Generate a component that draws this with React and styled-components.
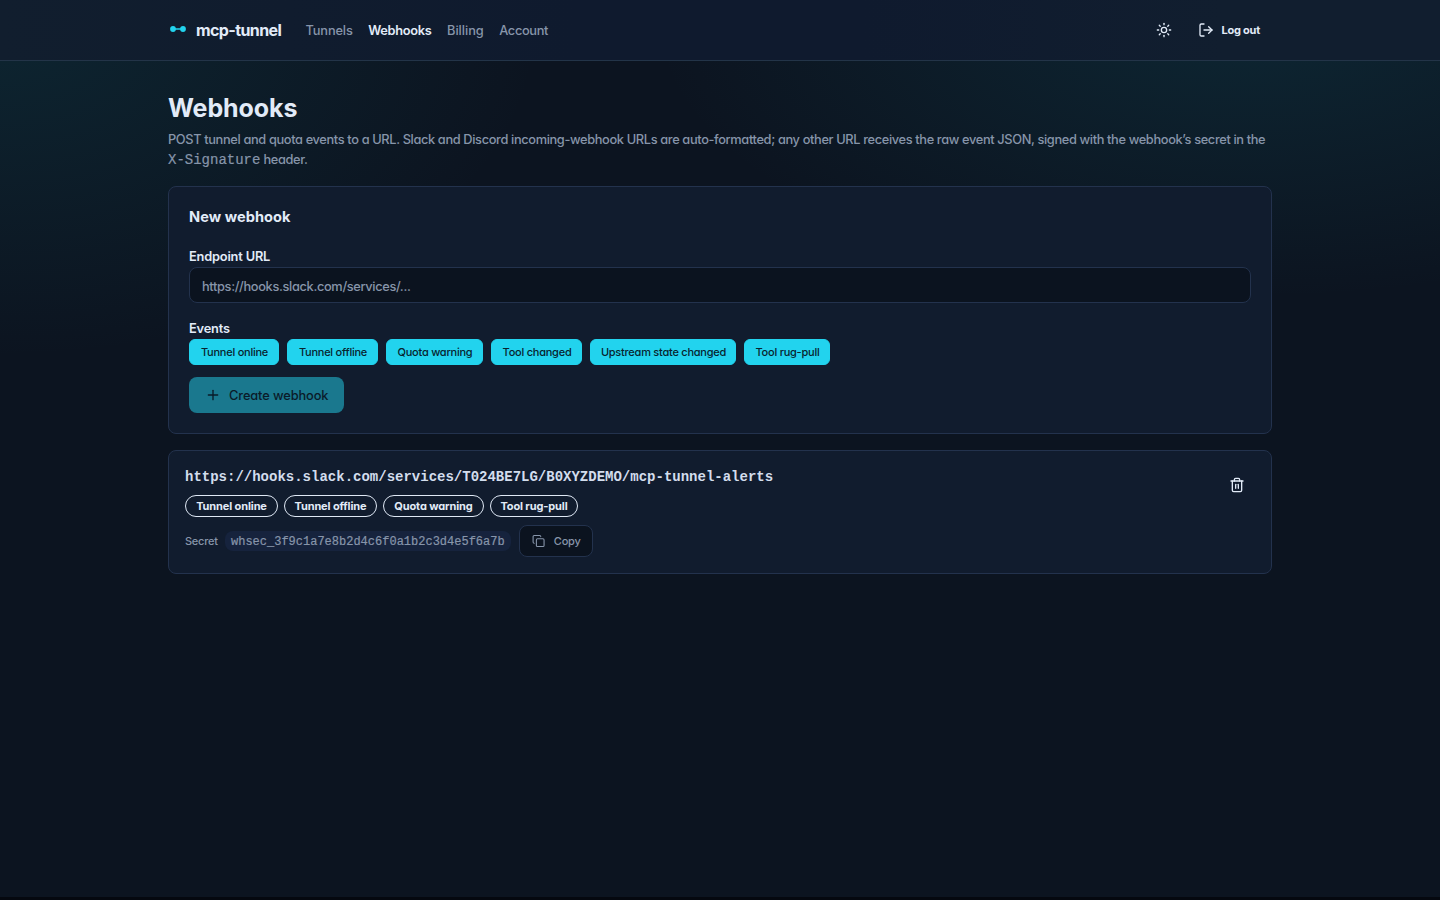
import React from "react";
import styled, { createGlobalStyle } from "styled-components";
import { Sun, LogOut, Plus, Copy, Trash2 } from "lucide-react";

const sans = '"Inter", "Liberation Sans", sans-serif';
const mono = '"Liberation Mono", monospace';

const GlobalStyle = createGlobalStyle`
  *, *::before, *::after { box-sizing: border-box; }
  body {
    margin: 0;
    background: #0c1420;
    color: #e2ebf8;
    font: 450 12.8px/20px ${sans};
    font-feature-settings: "cv11";
  }
  button, input { font: inherit; font-feature-settings: inherit; color: inherit; }
`;

const Page = styled.div`
  height: 900px;
  overflow: hidden;
  border-bottom: 3px solid #05080f;
  background:
    radial-gradient(540px 330px at 0% 3%, rgba(18, 120, 130, 0.17), transparent 100%),
    radial-gradient(600px 280px at 87% 2%, rgba(18, 120, 135, 0.18), transparent 100%),
    #0c1420;
`;

const Header = styled.header`
  height: 61px;
  background: linear-gradient(90deg, #111e2e 0%, #0f1a2e 40%, #0f1a2e 60%, #111e2f 85%);
  border-bottom: 1px solid #233448;
`;

const HeaderInner = styled.div`
  display: flex;
  align-items: center;
  width: 1104px;
  height: 60px;
  margin: 0 auto;
`;

const Brand = styled.div`
  display: flex;
  align-items: center;
  gap: 8px;
  width: 113.5px;
  font-size: 16px;
  font-weight: 680;
  letter-spacing: -0.6px;
  white-space: nowrap;
  svg { margin-top: -2px; flex: none; }
`;

const Nav = styled.nav`
  display: flex;
  gap: 15.5px;
  margin-left: 24px;
  padding-top: 1px;
`;

const NavLink = styled.a`
  color: ${(p) => (p.$active ? "#e2ebf8" : "#8795aa")};
  font-weight: ${(p) => (p.$active ? 620 : 450)};
  letter-spacing: ${(p) => p.$track}px;
`;

const Actions = styled.div`
  display: flex;
  align-items: center;
  gap: 4px;
  margin-left: auto;
`;

const GhostButton = styled.button`
  display: flex;
  align-items: center;
  justify-content: center;
  gap: 7px;
  height: 36px;
  min-width: 36px;
  padding: 0 ${(p) => p.$pad || 0}px;
  border: 0;
  background: none;
  font-size: 11px;
  font-weight: 680;
  letter-spacing: -0.22px;
`;

const Main = styled.main`
  display: flex;
  flex-direction: column;
  gap: 16px;
  width: 1104px;
  margin: 0 auto;
  padding-top: 32px;
`;

const Intro = styled.div`
  height: 77px;
`;

const Title = styled.h1`
  margin: 0 0 5px;
  font-size: 25px;
  font-weight: 650;
  line-height: 31px;
  letter-spacing: -0.08px;
`;

const Lead = styled.p`
  margin: 0;
  padding-top: 1px;
  color: #8795aa;
  letter-spacing: -0.355px;
  code {
    font: 14px/20px ${mono};
    letter-spacing: 0;
    -webkit-text-stroke: 0.2px;
  }
`;

const Card = styled.section`
  display: flex;
  flex-direction: ${(p) => (p.$row ? "row" : "column")};
  padding: ${(p) => p.$pad}px;
  border: 1px solid #23324d;
  border-radius: 8px;
  background: #111c2e;
`;

const CardTitle = styled.h2`
  margin: 0 0 20px;
  font-size: 14.6px;
  font-weight: 680;
  line-height: 20px;
  letter-spacing: 0.05px;
`;

const Label = styled.label`
  font-weight: 620;
  letter-spacing: -0.18px;
`;

const UrlInput = styled.input`
  height: 36px;
  margin-bottom: 16px;
  padding: 2px 12px 0;
  border: 1px solid #23324d;
  border-radius: 8px;
  background: #0b131f;
  letter-spacing: -0.34px;
  outline: 0;
  &::placeholder { color: #8795aa; opacity: 1; }
`;

const Chips = styled.div`
  display: flex;
  gap: 8px;
  margin-bottom: 12px;
`;

const Chip = styled.button`
  width: ${(p) => p.$width}px;
  height: 26px;
  padding: 0 0 0 1px;
  border: 1px solid #22d3ee;
  border-radius: 6px;
  background: #22d3ee;
  color: #08242f;
  font-size: 11px;
  letter-spacing: -0.24px;
  white-space: nowrap;
`;

const CreateButton = styled.button`
  display: flex;
  align-items: center;
  align-self: flex-start;
  gap: 8px;
  width: 155px;
  height: 36px;
  padding: 1px 15px 0 16px;
  border: 0;
  border-radius: 8px;
  background: #1a788e;
  color: #0a1b29;
  font-weight: 520;
  letter-spacing: -0.1px;
  white-space: nowrap;
  svg { margin-top: -1px; }
`;

const HookBody = styled.div`
  display: flex;
  flex-direction: column;
  flex: 1;
`;

const HookUrl = styled.div`
  font: 700 14px/20px ${mono};
  color: #d3dded;
  margin-bottom: 8px;
`;

const Badges = styled.div`
  display: flex;
  gap: 6px;
  margin-bottom: 8px;
`;

const Badge = styled.span`
  width: ${(p) => p.$width}px;
  height: 22px;
  border: 1px solid #dfe8f5;
  border-radius: 11px;
  font-size: 11px;
  font-weight: 680;
  line-height: 20px;
  letter-spacing: -0.12px;
  text-align: center;
  white-space: nowrap;
`;

const SecretRow = styled.div`
  display: flex;
  align-items: center;
  gap: 8px;
  height: 32px;
  color: #8795aa;
  font-size: 11px;
`;

const SecretLabel = styled.span`
  width: 32px;
  letter-spacing: -0.25px;
`;

const SecretCode = styled.code`
  padding: 2px 6px 0;
  border-radius: 8px;
  background: #16233d;
  font: 12px/18px ${mono};
  -webkit-text-stroke: 0.2px;
`;

const CopyButton = styled.button`
  display: flex;
  align-items: center;
  gap: 9px;
  width: 74px;
  height: 32px;
  padding: 0 11px 0 12px;
  border: 1px solid #23324d;
  border-radius: 8px;
  background: #0b131f;
  font-weight: 550;
  letter-spacing: -0.2px;
`;

const DeleteButton = styled(GhostButton)`
  width: 36px;
`;

const links = [
  ["Tunnels", -0.14],
  ["Webhooks", -0.29],
  ["Billing", -0.04],
  ["Account", -0.34],
];

const events = [
  ["Tunnel online", 90],
  ["Tunnel offline", 91],
  ["Quota warning", 97],
  ["Tool changed", 91],
  ["Upstream state changed", 146],
  ["Tool rug-pull", 86],
];

const subscribed = [
  ["Tunnel online", 93],
  ["Tunnel offline", 93],
  ["Quota warning", 101],
  ["Tool rug-pull", 88],
];

function Logo() {
  return (
    <svg width="20" height="20" viewBox="0 0 20 20" fill="#22d3ee">
      <circle cx="5" cy="10" r="2.9" />
      <circle cx="15" cy="10" r="2.9" />
      <path d="M5 10h10" stroke="#22d3ee" strokeWidth="1.5" />
    </svg>
  );
}

export default function App() {
  return (
    <Page>
      <GlobalStyle />
      <Header>
        <HeaderInner>
          <Brand>
            <Logo />
            mcp-tunnel
          </Brand>
          <Nav>
            {links.map(([name, track]) => (
              <NavLink key={name} $track={track} $active={name === "Webhooks"}>
                {name}
              </NavLink>
            ))}
          </Nav>
          <Actions>
            <GhostButton aria-label="Theme">
              <Sun size={16} />
            </GhostButton>
            <GhostButton $pad={12}>
              <LogOut size={16} />
              Log out
            </GhostButton>
          </Actions>
        </HeaderInner>
      </Header>
      <Main>
        <Intro>
          <Title>Webhooks</Title>
          <Lead>
            POST tunnel and quota events to a URL. Slack and Discord incoming-webhook URLs are
            auto-formatted; any other URL receives the raw event JSON, signed with the webhook’s
            secret in the <code>X-Signature</code> header.
          </Lead>
        </Intro>
        <Card $pad={20}>
          <CardTitle>New webhook</CardTitle>
          <Label>Endpoint URL</Label>
          <UrlInput placeholder="https://hooks.slack.com/services/..." />
          <Label as="div">Events</Label>
          <Chips>
            {events.map(([name, width]) => (
              <Chip key={name} $width={width}>
                {name}
              </Chip>
            ))}
          </Chips>
          <CreateButton disabled>
            <Plus size={16} />
            Create webhook
          </CreateButton>
        </Card>
        <Card $row $pad={16}>
          <HookBody>
            <HookUrl>https://hooks.slack.com/services/T024BE7LG/B0XYZDEMO/mcp-tunnel-alerts</HookUrl>
            <Badges>
              {subscribed.map(([name, width]) => (
                <Badge key={name} $width={width}>
                  {name}
                </Badge>
              ))}
            </Badges>
            <SecretRow>
              <SecretLabel>Secret</SecretLabel>
              <SecretCode>whsec_3f9c1a7e8b2d4c6f0a1b2c3d4e5f6a7b</SecretCode>
              <CopyButton>
                <Copy size={14} />
                Copy
              </CopyButton>
            </SecretRow>
          </HookBody>
          <DeleteButton aria-label="Delete webhook">
            <Trash2 size={16} />
          </DeleteButton>
        </Card>
      </Main>
    </Page>
  );
}
